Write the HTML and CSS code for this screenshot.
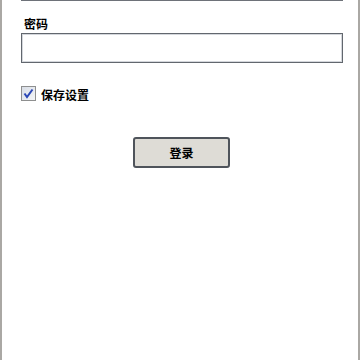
FILE: index.html
```html
<!DOCTYPE html>
<html>
<head>
<meta charset="utf-8">
<link rel="stylesheet" href="styles.css">
</head>
<body>
<div class="frame">
  <div class="prev-input"></div>
  <label class="label">密码</label>
  <div class="input"></div>
  <div class="check-row">
    <span class="checkbox">
      <svg width="15" height="15" viewBox="0 0 15 15">
        <defs>
          <linearGradient id="g" x1="0" y1="0" x2="1" y2="1">
            <stop offset="0" stop-color="#d8dde6"/>
            <stop offset="1" stop-color="#f4f6f8"/>
          </linearGradient>
        </defs>
        <rect x="0.5" y="0.5" width="14" height="14" fill="url(#g)" stroke="#8e8f8f"/>
        <path d="M3.5 7.5 L6 11 L11.5 3.5" fill="none" stroke="#2b47b6" stroke-width="2"/>
      </svg>
    </span>
    <span class="check-text">保存设置</span>
  </div>
  <div class="btn-row">
    <div class="button">登录</div>
  </div>
</div>
</body>
</html>
```

FILE: styles.css
```css
html, body {
  margin: 0;
  padding: 0;
  background: #ffffff;
  height: 100%;
}
.frame {
  box-sizing: border-box;
  width: 360px;
  height: 360px;
  border-left: 2px solid #aaa8a4;
  border-right: 2px solid #aaa8a4;
  padding-left: 19px;
  font-family: "Noto Sans CJK SC", sans-serif;
  font-size: 12px;
  color: #000;
  display: flex;
  flex-direction: column;
}
.prev-input {
  width: 322px;
  height: 1px;
  background: #6e7279;
}
.label {
  display: block;
  margin-top: 15px;
  margin-left: 3px;
  line-height: 16px;
  height: 16px;
  font-weight: bold;
}
.input {
  box-sizing: border-box;
  margin-top: 1px;
  width: 322px;
  height: 30px;
  border: 1px solid #62676e;
  box-shadow: inset 0 0 0 1px #d4d7dc;
  background: #fff;
}
.check-row {
  display: flex;
  align-items: center;
  margin-top: 22px;
  height: 16px;
}
.checkbox {
  display: block;
  width: 15px;
  height: 15px;
  line-height: 0;
}
.check-text {
  margin-left: 5px;
  line-height: 16px;
  font-weight: bold;
  margin-top: 3px;
}
.btn-row {
  margin-top: 36px;
  padding-left: 112px;
}
.button {
  box-sizing: border-box;
  width: 97px;
  height: 31px;
  border: 2px solid #4f545b;
  border-radius: 3px;
  background: #dedcd6;
  display: flex;
  align-items: center;
  justify-content: center;
  font-weight: bold;
}
```
